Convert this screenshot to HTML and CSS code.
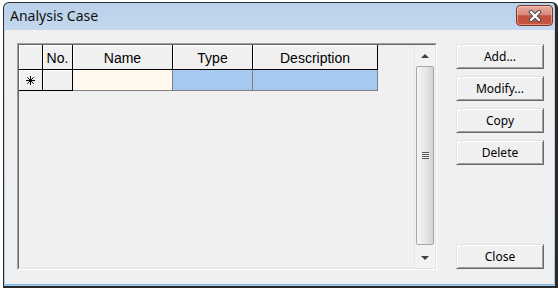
FILE: index.html
```html
<!DOCTYPE html>
<html lang="en">
<head>
    <link rel="stylesheet" href="styles.css">
</head>
<body>
    <div class="window">
        <div class="titlebar">
            <span class="title">Analysis Case</span>
            <button class="close-x" aria-label="Close">
                <svg width="14" height="12" viewBox="0 0 14 12">
                    <path d="M3 2 L11 10 M11 2 L3 10" stroke="#4a4a4a" stroke-width="4.4" stroke-linecap="round"/>
                    <path d="M3 2 L11 10 M11 2 L3 10" stroke="#fff" stroke-width="2.4" stroke-linecap="round"/>
                </svg>
            </button>
        </div>
        <div class="client">
            <div class="grid-frame">
                <div class="grid-inner">
                    <div class="cases">
                        <div class="cell head"></div>
                        <div class="cell head">No.</div>
                        <div class="cell head">Name</div>
                        <div class="cell head">Type</div>
                        <div class="cell head">Description</div>

                        <div class="cell head new-row">
                            <svg width="9" height="9" viewBox="0 0 9 9">
                                <path d="M4.5 0 V9 M0 4.5 H9 M1.3 1.3 L7.7 7.7 M7.7 1.3 L1.3 7.7" stroke="#000" stroke-width="1"/>
                            </svg>
                        </div>
                        <div class="cell head"></div>
                        <div class="cell name"></div>
                        <div class="cell type"></div>
                        <div class="cell type"></div>
                    </div>
                    <div class="vscroll">
                        <div class="arrow"><span class="tri up"></span></div>
                        <div class="thumb">
                            <span class="grip"></span>
                        </div>
                        <div class="arrow"><span class="tri down"></span></div>
                    </div>
                </div>
            </div>
            <div class="actions">
                <button class="btn">Add...</button>
                <button class="btn">Modify...</button>
                <button class="btn">Copy</button>
                <button class="btn">Delete</button>
                <button class="btn close-btn">Close</button>
            </div>
        </div>
    </div>
</body>
</html>
```

FILE: styles.css
```css
body {
    margin: 0;
    background-color: #fff;
    font-family: "Noto Sans", "Open Sans", sans-serif;
}
.window {
    margin: 2px 0 0 3px;
    width: 555px;
    height: 286px;
    box-sizing: border-box;
    border: 1px solid #2a2a2a;
    border-right-width: 3px;
    border-bottom-width: 2px;
    border-radius: 6px 6px 0 0;
    background: linear-gradient(#bad1ea, #c5d9ee 30px, #a9cbe9);
    display: flex;
    flex-direction: column;
}
.titlebar {
    height: 27px;
    display: flex;
    align-items: flex-start;
}
.title {
    flex: 1;
    padding: 0 0 0 6px;
    font-size: 14px;
    line-height: 25px;
    color: #111;
}
.close-x {
    width: 37px;
    height: 21px;
    margin: 2px 2px 0 0;
    padding: 0;
    border: 1px solid #80372b;
    border-radius: 4px;
    background: linear-gradient(#e8ab9e, #d98b7b 45%, #c4513e 52%, #c8553f);
    box-shadow: inset 0 0 0 1px rgba(255, 220, 210, 0.45);
    display: flex;
    align-items: center;
    justify-content: center;
}
.client {
    flex: 1;
    margin: 0 1px 1px 1px;
    background-color: #f0f0f0;
    border-bottom: 1px solid #7fb9e4;
    display: flex;
    padding: 13px 0 0 12px;
    box-sizing: border-box;
}
.grid-frame {
    width: 420px;
    height: 227px;
    box-sizing: border-box;
    border: 1px solid;
    border-color: #a0a0a0 #fff #fff #a0a0a0;
}
.grid-inner {
    height: 100%;
    box-sizing: border-box;
    border: 1px solid;
    border-color: #696969 #e3e3e3 #e3e3e3 #696969;
    display: flex;
    justify-content: space-between;
    background-color: #f0f0f0;
}
.cases {
    display: grid;
    grid-template-columns: 24px 30px 100px 80px 125px;
    grid-template-rows: 25px 21px;
    align-self: flex-start;
    font-family: "Liberation Sans", Arial, sans-serif;
    font-size: 14px;
}
.cell {
    box-sizing: border-box;
    border-right: 1px solid #808080;
    border-bottom: 1px solid #808080;
}
.head {
    background-color: #f0f0f0;
    border-color: #000;
    box-shadow: inset 1px 1px #fff;
    text-align: center;
    padding-top: 2px;
    line-height: 22px;
    color: #000;
}
.new-row {
    padding: 0;
    display: flex;
    align-items: center;
    justify-content: center;
}
.name {
    background-color: #fff9ee;
}
.type {
    background-color: #a6c9f0;
}
.vscroll {
    width: 20px;
    display: flex;
    flex-direction: column;
    background-color: #f2f2f2;
    border-left: 1px solid #e6e6e6;
}
.arrow {
    height: 21px;
    display: flex;
    align-items: center;
    justify-content: center;
}
.tri {
    width: 0;
    height: 0;
    border-left: 4px solid transparent;
    border-right: 4px solid transparent;
}
.tri.up {
    border-bottom: 4px solid #404040;
}
.tri.down {
    border-top: 4px solid #404040;
}
.thumb {
    flex: 1;
    margin: 0 1px 2px;
    border: 1px solid #a8a8a8;
    border-radius: 2px;
    background: linear-gradient(90deg, #f6f6f6, #e6e6e6 55%, #d2d2d2);
    display: flex;
    align-items: center;
    justify-content: center;
}
.grip {
    width: 7px;
    height: 7px;
    background: repeating-linear-gradient(#555 0 1px, #f4f4f4 1px 2px);
}
.actions {
    width: 88px;
    height: 225px;
    margin: 1px 0 0 19px;
    display: flex;
    flex-direction: column;
    gap: 7px;
}
.btn {
    height: 25px;
    padding: 0;
    border: 1px solid;
    border-color: #e3e3e3 #696969 #696969 #e3e3e3;
    box-shadow: inset 1px 1px #fff, inset -1px -1px #a0a0a0;
    background-color: #f0f0f0;
    font-family: "Noto Sans", "Open Sans", sans-serif;
    font-size: 12px;
    color: #000;
}
.close-btn {
    margin-top: auto;
}
```
